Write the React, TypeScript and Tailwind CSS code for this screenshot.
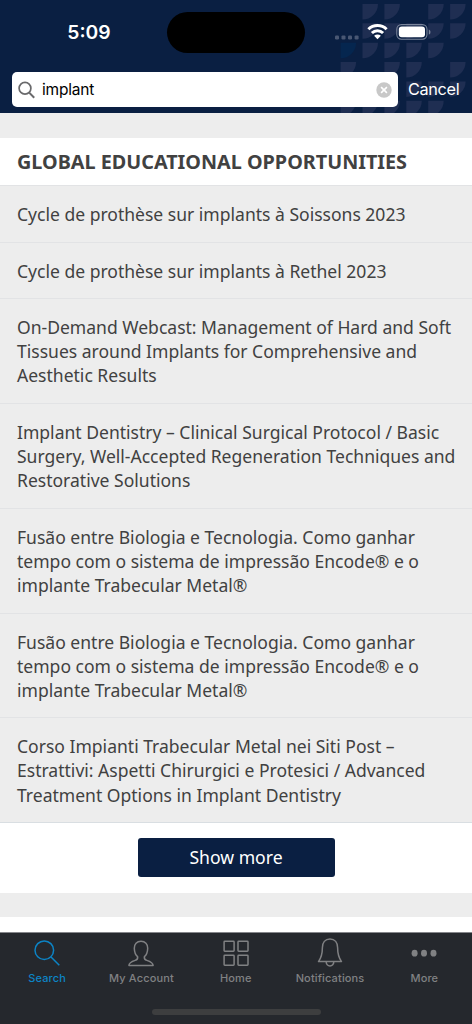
import type { ReactNode } from 'react';

const results = [
  ['Cycle de prothèse sur implants à Soissons 2023'],
  ['Cycle de prothèse sur implants à Rethel 2023'],
  [
    'On-Demand Webcast: Management of Hard and Soft',
    'Tissues around Implants for Comprehensive and',
    'Aesthetic Results',
  ],
  [
    'Implant Dentistry – Clinical Surgical Protocol / Basic',
    'Surgery, Well-Accepted Regeneration Techniques and',
    'Restorative Solutions',
  ],
  [
    'Fusão entre Biologia e Tecnologia. Como ganhar',
    'tempo com o sistema de impressão Encode® e o',
    'implante Trabecular Metal®',
  ],
  [
    'Fusão entre Biologia e Tecnologia. Como ganhar',
    'tempo com o sistema de impressão Encode® e o',
    'implante Trabecular Metal®',
  ],
  [
    'Corso Impianti Trabecular Metal nei Siti Post –',
    'Estrattivi: Aspetti Chirurgici e Protesici / Advanced',
    'Treatment Options in Implant Dentistry',
  ],
];

// one string per row of leaves: x = light, b = blue, . = empty
const leaves = ['.xx.xx', '.xxxxx', 'bxxxx.', 'x.xx.x', '...xxx', 'xxxxx.'];

const HeaderPattern = () => (
  <svg className="absolute top-0 right-0" width="132" height="113">
    {leaves.map((row, y) =>
      row.split('').map((cell, x) =>
        cell === '.' ? null : (
          <path
            key={`${x}-${y}`}
            d="M0 0H15.5A15.5 15.5 0 0 1 0 15.5Z"
            transform={`translate(${0.6 + x * 21.9} ${4 + y * 19.35})`}
            fill={cell === 'b' ? '#05264f' : '#1f2e52'}
          />
        )
      )
    )}
  </svg>
);

const StatusBar = () => (
  <div className="h-[72px] pt-3 flex">
    <div className="w-[167px] h-[41px] pl-[11px] flex items-center justify-center text-[19.3px] font-semibold">
      <span>5:09</span>
    </div>
    <div className="w-[138px] h-[41px] rounded-full bg-black" />
    <svg className="ml-[29px]" width="104" height="41" viewBox="334 12 104 41">
      <g fill="#495773">
        <rect x="335" y="35.4" width="4" height="4" rx="1.2" />
        <rect x="341.5" y="35.4" width="4" height="4" rx="1.2" />
        <rect x="348" y="35.4" width="4" height="4" rx="1.2" />
        <rect x="354.6" y="35.4" width="4" height="4" rx="1.2" />
      </g>
      <path
        d="M368.4 29.2a13 13 0 0 1 18.2 0M371.9 33a8 8 0 0 1 11.2 0"
        fill="none"
        stroke="#fff"
        strokeWidth="3"
      />
      <path d="M377.5 39.3l-3.4-3.5a4.9 4.9 0 0 1 6.8 0z" fill="#fff" />
      <rect
        x="396.8"
        y="24.6"
        width="30.2"
        height="14.6"
        rx="4.6"
        fill="none"
        stroke="#7a859b"
        strokeWidth="1.1"
      />
      <rect x="398.8" y="26.6" width="26.2" height="10.6" rx="3" fill="#fff" />
      <path d="M428.8 29.4c2.2.8 2.2 4.4 0 5.2z" fill="#7a859b" />
    </svg>
  </div>
);

const SearchBar = () => (
  <div className="flex items-center pl-3">
    <div className="flex items-center w-[386px] h-[35px] rounded-[5px] bg-white pl-1.5 pr-1.5">
      <svg width="17" height="18" fill="none" stroke="#69696b" strokeWidth="1.7">
        <circle cx="7" cy="7.2" r="5.9" />
        <path d="M11.2 11.6l5 5.2" strokeWidth="2" />
      </svg>
      <span className="ml-[7px] flex-1 text-[15.5px] tracking-[-0.2px] text-black">
        implant
      </span>
      <svg width="16" height="16">
        <circle cx="8" cy="8" r="7.7" fill="#c8c8c8" />
        <path d="M5.1 5.1l5.8 5.8M10.9 5.1l-5.8 5.8" stroke="#fff" strokeWidth="1.6" />
      </svg>
    </div>
    <span className="ml-2.5 text-[16.3px] tracking-[-0.35px]">Cancel</span>
  </div>
);

interface TabProps {
  label: string;
  active?: boolean;
  children: ReactNode;
}

const Tab = ({ label, active, children }: TabProps) => (
  <div
    className={`w-[94.3px] flex flex-col items-center ${
      active ? 'text-[#0c84c6]' : 'text-[#808183]'
    }`}
  >
    <svg
      width="32"
      height="32"
      fill="none"
      stroke="currentColor"
      strokeWidth="1.5"
      strokeLinejoin="round"
    >
      {children}
    </svg>
    <span className="mt-px text-[11px] leading-4 font-medium tracking-[0.15px] whitespace-nowrap">
      {label}
    </span>
  </div>
);

export default function App() {
  return (
    <div className="w-[472px] h-[1024px] overflow-hidden flex flex-col bg-[#ededed] font-['Inter',sans-serif]">
      <header className="relative h-[113px] shrink-0 bg-[#0a1f42] text-white">
        <HeaderPattern />
        <div className="relative">
          <StatusBar />
          <SearchBar />
        </div>
      </header>

      <main className="flex-1 min-h-0 overflow-hidden pt-[24.5px] font-['Noto_Sans',sans-serif] text-[#414141]">
        <section className="bg-white">
          <h2 className="h-[47.5px] pl-[17px] text-[19.8px] leading-[47px] font-bold whitespace-nowrap">
            GLOBAL EDUCATIONAL OPPORTUNITIES
          </h2>
          <ul className="bg-[#ededed]">
            {results.map((lines, index) => (
              <li
                key={index}
                className="border-t border-[#e2e3e5] pl-[17px] pt-[16px] pb-[15.5px] text-[17.55px] leading-[24.1px] whitespace-nowrap"
              >
                {lines.map((line) => (
                  <div key={line}>{line}</div>
                ))}
              </li>
            ))}
          </ul>
          <div className="h-[71px] border-t border-[#d9dee2] pt-[15px]">
            <button className="block mx-auto w-[197px] h-[39px] rounded-[3px] bg-[#0a1f42] text-[17.6px] text-white">
              Show more
            </button>
          </div>
        </section>
        <div className="mt-6 h-12 bg-white" />
      </main>

      <nav className="h-[92px] shrink-0 border-t border-[#85868a] bg-[#25282d]">
        <div className="flex pt-1">
          <Tab label="Search" active>
            <circle cx="13.3" cy="13.2" r="9.3" />
            <path d="M20 20l8.3 8.3" />
          </Tab>
          <Tab label="My Account">
            <path d="M16 4.3c-4.2 0-6.8 2.8-6.7 7 .1 3.4 1.1 6.7 3.3 8.3.5 2.3-.2 3.1-2.4 3.8-3.7 1.1-6.1 2.2-6.3 5h24.2c-.2-2.8-2.6-3.9-6.3-5-2.2-.7-2.9-1.5-2.4-3.8 2.2-1.6 3.2-4.9 3.3-8.3.1-4.2-2.5-7-6.7-7z" />
          </Tab>
          <Tab label="Home">
            <rect x="4.1" y="4.3" width="10" height="10" rx="0.7" />
            <rect x="18" y="4.3" width="10" height="10" rx="0.7" />
            <rect x="4.1" y="18.3" width="10" height="10" rx="0.7" />
            <rect x="18" y="18.3" width="10" height="10" rx="0.7" />
          </Tab>
          <Tab label="Notifications">
            <path d="M16 1.9c-5 0-7.6 3.7-7.6 8.7 0 6.3-.7 9.7-3.9 14h23c-3.2-4.3-3.9-7.7-3.9-14 0-5-2.6-8.7-7.6-8.7zM12.2 24.8a3.8 4.2 0 0 0 7.6 0" />
          </Tab>
          <Tab label="More">
            <g fill="currentColor" stroke="none">
              <ellipse cx="6.6" cy="16.2" rx="3" ry="3.4" />
              <ellipse cx="16" cy="16.2" rx="3" ry="3.4" />
              <ellipse cx="25.5" cy="16.2" rx="3" ry="3.4" />
            </g>
          </Tab>
        </div>
        <div className="mx-auto mt-[23px] w-[169px] h-[6px] rounded-full bg-[#3d3e3f]" />
      </nav>
    </div>
  );
}
